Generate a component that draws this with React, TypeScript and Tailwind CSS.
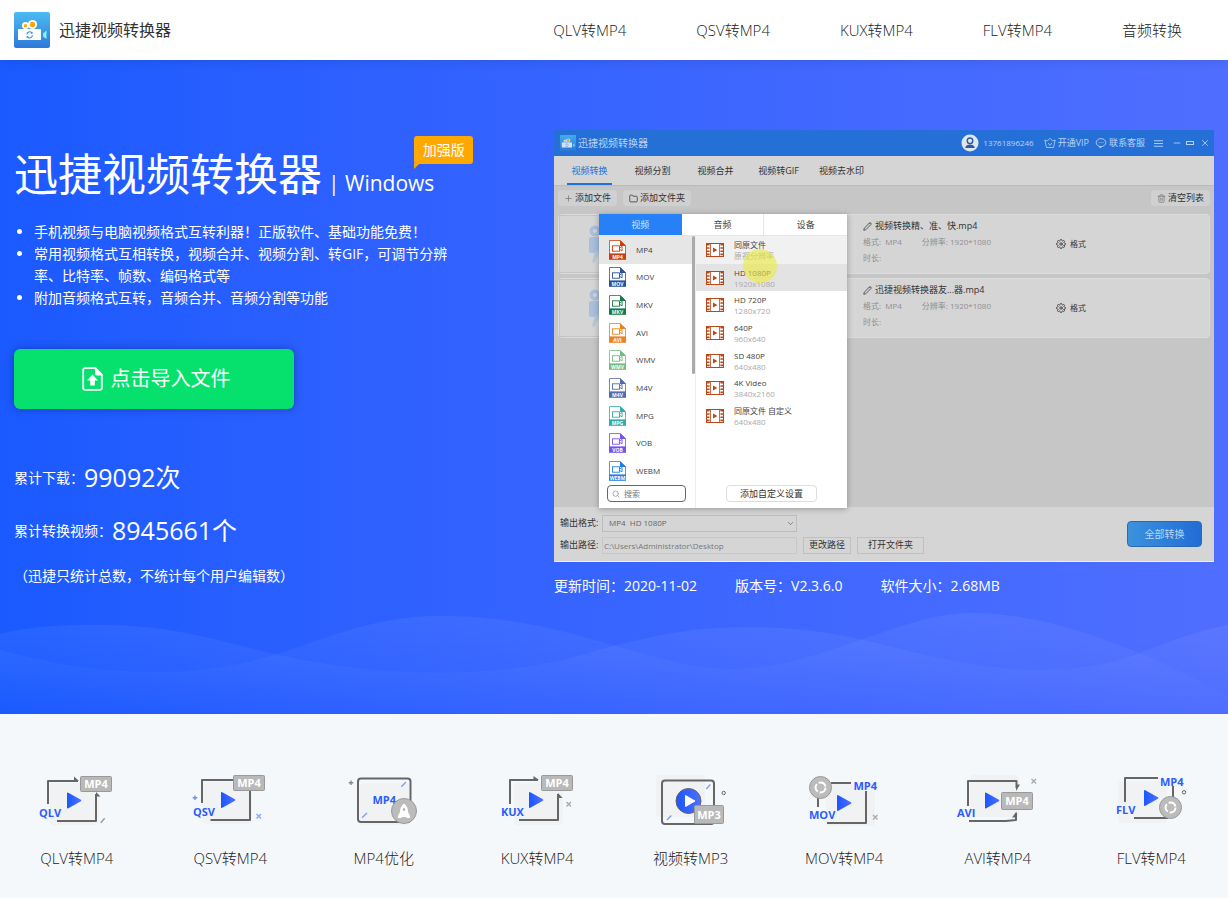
import type { ReactNode } from "react";
import {
  FiChevronDown,
  FiEdit2,
  FiFolder,
  FiMenu,
  FiMinus,
  FiPlus,
  FiSearch,
  FiSettings,
  FiTrash2,
  FiX,
} from "react-icons/fi";

const NAV = ["QLV转MP4", "QSV转MP4", "KUX转MP4", "FLV转MP4", "音频转换"];

const APP_TABS = ["视频转换", "视频分割", "视频合并", "视频转GIF", "视频去水印"];

const FORMATS = [
  { name: "MP4", color: "#c8400f" },
  { name: "MOV", color: "#2c5299" },
  { name: "MKV", color: "#147a43" },
  { name: "AVI", color: "#e88420" },
  { name: "WMV", color: "#72bb80" },
  { name: "M4V", color: "#536bad" },
  { name: "MPG", color: "#35aaa8" },
  { name: "VOB", color: "#7952e8" },
  { name: "WEBM", color: "#1f80e0" },
];

const SIZES = [
  { name: "同原文件", size: "原视分辨率", bg: "bg-[#f1f1f1]" },
  { name: "HD 1080P", size: "1920x1080", bg: "bg-[#e3e3e3]" },
  { name: "HD 720P", size: "1280x720", bg: "" },
  { name: "640P", size: "960x640", bg: "" },
  { name: "SD 480P", size: "640x480", bg: "" },
  { name: "4K Video", size: "3840x2160", bg: "" },
  { name: "同原文件 自定义", size: "640x480", bg: "" },
];

const FILES = ["视频转换精、准、快.mp4", "迅捷视频转换器友...器.mp4"];

function Logo({ className }: { className: string }) {
  return (
    <svg viewBox="0 0 36 36" className={className} aria-hidden="true">
      <defs>
        <linearGradient id="logoBg" x1="0" y1="0" x2="0" y2="1">
          <stop offset="0" stopColor="#4bbcf2" />
          <stop offset="1" stopColor="#2f78d8" />
        </linearGradient>
      </defs>
      <rect width="36" height="36" rx="2" fill="url(#logoBg)" />
      <circle cx="11.5" cy="13.5" r="3.6" fill="#fff" />
      <circle cx="11.5" cy="13.8" r="1.7" fill="#ffa800" />
      <circle cx="18.5" cy="12.5" r="4.6" fill="#fff" />
      <circle cx="18.5" cy="12.5" r="2.7" fill="#ffa800" />
      <rect x="4" y="17" width="23" height="11" rx="0.6" fill="#fff" />
      <path d="M29 21.5 L32.5 18.5 V27 L29 24.5z" fill="#7ff3f0" />
      <path d="M12.8 22.5a2.8 2.8 0 0 1 5-1.6M18.4 23.3a2.8 2.8 0 0 1-5 1.6" fill="none" stroke="#3b8be8" strokeWidth="1.1" />
      <path d="M18.6 19.6v2.2h-2.2zM12.6 26.2V24h2.2z" fill="#3b8be8" />
    </svg>
  );
}

function FormatIcon({ name, color }: { name: string; color: string }) {
  return (
    <svg viewBox="0 0 17 20" className="h-5 w-[17px] shrink-0" aria-hidden="true">
      <path d="M.5 14V.5h10.8L16.5 5.5V14" fill="#fff" stroke={color} strokeWidth=".8" />
      <path d="M11 .2L17 6h-6z" fill={color} />
      <rect x="3.5" y="5.8" width="7" height="5.4" fill="none" stroke={color} strokeWidth=".9" />
      <path d="M10.5 8l2.6-1.6v4.4L10.5 9.4" fill="none" stroke={color} strokeWidth=".9" />
      <rect y="13.4" width="17" height="6.4" fill={color} />
      <text x="8.5" y="18.5" textAnchor="middle" fontSize="5" fontWeight="700" fill="#fff">
        {name}
      </text>
    </svg>
  );
}

function FilmIcon() {
  return (
    <svg viewBox="0 0 18 14" className="h-3.5 w-[18px] shrink-0" aria-hidden="true">
      <rect x=".5" y=".5" width="17" height="13" fill="#fff" stroke="#b8481c" />
      <path d="M4.5.5v13M13.5.5v13" stroke="#b8481c" strokeWidth=".8" />
      <path d="M2.3 1v12M15.7 1v12" stroke="#b8481c" strokeWidth="2.6" strokeDasharray="1.6 1.6" />
      <path d="M7 4.4L11.4 7 7 9.6z" fill="#b8481c" />
    </svg>
  );
}

function ThumbIcon() {
  return (
    <svg viewBox="0 0 60 44" className="ml-6 h-11 w-[60px]" aria-hidden="true">
      <circle cx="11" cy="9" r="5.5" fill="#a9bfda" />
      <circle cx="11" cy="9" r="2" fill="#d5d5d5" />
      <circle cx="25" cy="8" r="7" fill="#a9bfda" />
      <rect x="5" y="15" width="34" height="16" rx="2" fill="#a9bfda" />
      <path d="M11 29l5 1-6 11-2-1z" fill="#b8c8dc" />
    </svg>
  );
}

function ToolButton({ children }: { children: ReactNode }) {
  return (
    <button type="button" className="flex h-4 items-center gap-0.5 rounded-sm bg-[#d0d0d0] px-1.5 text-[9px] text-[#333]">
      {children}
    </button>
  );
}

function TitleBar() {
  return (
    <div className="flex h-[26px] items-center justify-between bg-[#2570d6] pr-1 pl-1.5 text-[#b9d3f5]">
      <div className="flex items-center gap-0.5">
        <Logo className="size-4 opacity-80" />
        <span className="text-[10px]">迅捷视频转换器</span>
      </div>
      <div className="flex items-center text-[9px]">
        <svg viewBox="0 0 18 18" className="mr-1 size-[18px]" aria-hidden="true">
          <circle cx="9" cy="9" r="8.5" fill="#dfe6ee" />
          <circle cx="9" cy="6.8" r="2.8" fill="none" stroke="#2b5c9c" strokeWidth="1.4" />
          <path d="M4.2 14c.4-2.6 2.4-3.6 4.8-3.6s4.400 1 4.800 3.600z" fill="#2b5c9c" />
        </svg>
        <span className="mr-2.5 text-[8px]">13761896246</span>
        <svg viewBox="0 0 12 12" className="mr-0.5 size-3" fill="none" stroke="currentColor" strokeWidth=".8" aria-hidden="true">
          <path d="M.8 3l2.600 1L6 1.200 8.600 4l2.600-1-1.700 7.500h-7zM4.200 6L6 8.500 7.800 6" />
        </svg>
        <span className="mr-1.5">开通VIP</span>
        <svg viewBox="0 0 12 12" className="mr-0.5 size-3" fill="none" stroke="currentColor" strokeWidth=".9" aria-hidden="true">
          <ellipse cx="6" cy="5.600" rx="4.800" ry="4" />
          <path d="M4.500 9.300l.5 1.700 1.800-1.500M3.600 5.600h.9M5.600 5.600h.9M7.600 5.600h.9" />
        </svg>
        <span className="mr-2">联系客服</span>
        <FiMenu size={11} className="mr-2" />
        <FiMinus size={10} className="mr-1" />
        <span className="mr-1.5 h-1 w-2 border border-current" />
        <FiX size={10} />
      </div>
    </div>
  );
}

function FormatPopup() {
  return (
    <div className="absolute top-[84px] left-[45px] flex h-[294px] w-[248px] flex-col bg-white text-[#444] shadow-[0_1px_6px_rgba(0,0,0,0.3)]">
      <div className="grid h-[22px] shrink-0 grid-cols-3 border-b border-[#e6e6e6] text-[9px]">
        <button type="button" className="bg-[#2680f8] text-[#cfe3ff]">视频</button>
        <button type="button" className="border-r border-[#e6e6e6]">音频</button>
        <button type="button">设备</button>
      </div>
      <div className="flex flex-1">
        <div className="relative w-[97px] border-r border-[#eee]">
          <ul className="grid h-[249px] grid-rows-9 overflow-hidden text-[8px]">
            {FORMATS.map((f) => (
              <li key={f.name} className="flex items-center gap-2.5 pl-2.5 first:bg-[#e6e6e6]">
                <FormatIcon name={f.name} color={f.color} />
                {f.name}
              </li>
            ))}
          </ul>
          <span className="absolute top-0 right-0 h-[138px] w-[3px] rounded-sm bg-[#aaa]" />
          <label className="mx-2 flex h-[17px] w-[79px] items-center gap-1 rounded-sm border border-[#666] bg-white px-1 text-[#888]">
            <FiSearch size={8} className="shrink-0" />
            <input aria-label="搜索" placeholder="搜索" className="w-full bg-transparent text-[8px] outline-none placeholder:text-[#777]" />
          </label>
        </div>
        <div className="flex flex-1 flex-col items-center">
          <ul className="grid h-[194px] w-full grid-rows-7">
            {SIZES.map((s) => (
              <li key={s.name} className={`flex items-center gap-2.5 pl-2.5 ${s.bg}`}>
                <FilmIcon />
                <div className="text-[8px] leading-[11px]">
                  <p>{s.name}</p>
                  <p className="text-[#aaa]">{s.size}</p>
                </div>
              </li>
            ))}
          </ul>
          <button type="button" className="mt-[55px] h-[17px] w-[91px] rounded-sm border border-[#ddd] text-[9px] text-[#333]">
            添加自定义设置
          </button>
        </div>
      </div>
      <span className="absolute top-[35px] left-[144px] size-[34px] rounded-full bg-[#ebeb3c]/60" />
    </div>
  );
}

function AppWindow() {
  return (
    <div className="relative border-b border-[#eee] bg-[#d5d5d5]">
      <TitleBar />
      <div className="flex h-[30px] border-b border-[#bbb] pl-1 text-[9px] text-[#333]">
        {APP_TABS.map((tab, i) => (
          <button
            key={tab}
            type="button"
            className={
              i === 0
                ? "mx-[9px] w-[45px] border-b-2 border-[#2570d6] pt-0.5 text-[#2570d6]"
                : "w-[63px]"
            }
          >
            {tab}
          </button>
        ))}
      </div>

      <div className="h-[321px] bg-[#c6c6c6] px-1 pt-1">
        <div className="flex justify-between">
          <div className="flex gap-1.5">
            <ToolButton>
              <FiPlus size={9} className="text-[#777]" /> 添加文件
            </ToolButton>
            <ToolButton>
              <FiFolder size={9} /> 添加文件夹
            </ToolButton>
          </div>
          <ToolButton>
            <FiTrash2 size={9} className="text-[#777]" /> 清空列表
          </ToolButton>
        </div>
        <div className="mt-2 flex flex-col gap-1">
          {FILES.map((file) => (
            <div key={file} className="flex h-[60px] items-center rounded-sm border border-[#dcdcdc] bg-[#d5d5d5]">
              <div className="flex h-full w-[280px] items-center border border-[#c4c4c4]">
                <ThumbIcon />
              </div>
              <div className="ml-6 w-[193px] pb-1 text-[8px] leading-4 text-[#8f8f8f]">
                <p className="flex items-center gap-[3px] text-[9px] text-[#333]">
                  <FiEdit2 size={9} /> {file}
                </p>
                <p className="flex gap-5">
                  <span>格式:&nbsp; MP4</span>
                  <span>分辨率: 1920*1080</span>
                </p>
                <p>时长:</p>
              </div>
              <button type="button" className="flex items-center gap-1 text-[8px] text-[#333]">
                <FiSettings size={10} /> 格式
              </button>
            </div>
          ))}
        </div>
      </div>

      <div className="flex h-[54px] items-center justify-between pr-3 pl-1.5 text-[9px] text-[#333]">
        <div className="flex flex-col gap-[5px]">
          <div className="flex items-center">
            <label htmlFor="format" className="w-[42px]">输出格式:</label>
            <div className="relative">
              <select
                id="format"
                className="h-[17px] w-[195px] appearance-none border border-[#bdbdbd] bg-transparent px-1.5 text-[8px] text-[#666]"
              >
                <option>MP4&nbsp; HD 1080P</option>
              </select>
              <FiChevronDown size={9} className="pointer-events-none absolute top-1 right-0.5 text-[#666]" />
            </div>
          </div>
          <div className="flex items-center">
            <label htmlFor="path" className="w-[42px]">输出路径:</label>
            <input
              id="path"
              readOnly
              value="C:\Users\Administrator\Desktop"
              className="h-[17px] w-[195px] border border-[#c8c8c8] bg-transparent px-px text-[8px] text-[#777]"
            />
            <button type="button" className="ml-1.5 h-[17px] w-12 border border-[#c0c0c0]">更改路径</button>
            <button type="button" className="ml-1.5 h-[17px] w-[67px] border border-[#c0c0c0]">打开文件夹</button>
          </div>
        </div>
        <button
          type="button"
          className="h-[26px] w-[75px] rounded-sm border border-[#2a6bb8] bg-linear-to-r from-[#3c92dd] to-[#226cd6] text-[10px] text-[#b9d6f5]"
        >
          全部转换
        </button>
      </div>

      <FormatPopup />
    </div>
  );
}

function Waves() {
  return (
    <svg
      viewBox="0 0 1228 102"
      preserveAspectRatio="none"
      className="absolute bottom-0 left-0 h-[102px] w-full"
      aria-hidden="true"
    >
      <defs>
        <linearGradient id="wave" x1="0" y1="0" x2="0" y2="1">
          <stop offset="0" stopColor="#fff" stopOpacity=".06" />
          <stop offset="1" stopColor="#fff" stopOpacity="0" />
        </linearGradient>
      </defs>
      <path
        fill="url(#wave)"
        d="M0 22C30 14 65 13 102 13C170 13 215 28 270 41C380 66 480 66 564 48C610 35 670 15 748 15C840 15 880 35 951 48C1010 60 1060 62 1112 50C1150 40 1180 22 1228 13V102H0Z"
      />
      <path
        fill="url(#wave)"
        d="M0 38C50 52 100 60 157 60C290 60 330 4 442 4C570 4 650 57 732 57C820 57 900 1 971 1C1060 1 1150 45 1198 68L1228 84V102H0Z"
      />
    </svg>
  );
}

// Small pieces shared by the converter icons

function Frame({ d }: { d: string }) {
  return <path d={d} fill="none" stroke="#666" strokeWidth="2" strokeLinejoin="round" />;
}

function Shade({ x, y }: { x: number; y: number }) {
  return <rect x={x} y={y} width="49" height="42" rx="4" fill="#f0f2f4" />;
}

function Play({ x, y }: { x: number; y: number }) {
  return (
    <path
      d={`M${x} ${y + 1}q0-1.400 1.300-.8l12.600 7q1 .8 0 1.600l-12.600 7q-1.300.6-1.300-.8z`}
      fill="url(#play)"
    />
  );
}

function Word({ x, y, children }: { x: number; y: number; children: string }) {
  return (
    <text x={x} y={y} fontSize="11" fontWeight="700" fill="#2b5cff">
      {children}
    </text>
  );
}

function Tag({ x, y, h = 15, w = 31, children }: { x: number; y: number; h?: number; w?: number; children: string }) {
  return (
    <>
      <rect x={x} y={y} width={w} height={h} rx="1" fill="#b9b9b9" stroke="#999" />
      <text x={x + w / 2} y={y + h / 2 + 4} textAnchor="middle" fontSize="11" fontWeight="700" fill="#fff">
        {children}
      </text>
    </>
  );
}

function Disc({ x, y }: { x: number; y: number }) {
  return (
    <>
      <circle cx={x} cy={y} r="11" fill="#bcbcbc" stroke="#999" />
      <circle cx={x} cy={y} r="5" fill="none" stroke="#fff" strokeWidth="2" strokeDasharray="8.500 2" />
    </>
  );
}

function Cross({ x, y, color = "#aaa" }: { x: number; y: number; color?: string }) {
  return <path d={`M${x - 2} ${y - 2}l4.500 4.500m0-4.500l-4.500 4.500`} stroke={color} strokeWidth="1.400" />;
}

const TOOLS: { label: string; art: ReactNode }[] = [
  {
    label: "QLV转MP4",
    art: (
      <>
        <Shade x={23} y={13} />
        <Frame d="M21 34V11H51M69 24V51H30" />
        <path d="M47 6.500l5 4.500h-5zM69 22l4.500 4.500H69z" fill="#666" />
        <Tag x={53.500} y={6.500}>MP4</Tag>
        <Play x={40} y={22.500} />
        <Word x={12} y={47}>QLV</Word>
        <path d="M73.700 52.700l4-4.400" stroke="#999" strokeWidth="1.400" />
      </>
    ),
  },
  {
    label: "QSV转MP4",
    art: (
      <>
        <Shade x={23} y={12} />
        <Frame d="M22 33V10H54M70 20V50H30.500" />
        <Tag x={53.500} y={5.500}>MP4</Tag>
        <Play x={41} y={22} />
        <Word x={13} y={46}>QSV</Word>
        <path d="M12.700 27.700h4.600M15 25.400v4.600" stroke="#6b8cff" strokeWidth="1.400" />
        <Cross x={78.500} y={46} color="#8ca6ff" />
      </>
    ),
  },
  {
    label: "MP4优化",
    art: (
      <>
        <Shade x={26} y={13} />
        <rect x="24" y="8.500" width="52.500" height="43.500" rx="3" fill="none" stroke="#666" strokeWidth="2" />
        <Word x={38.500} y={34}>MP4</Word>
        <path d="M67.300 16.700L72 12M28 47.700L33 43" stroke="#7f9cff" strokeWidth="1.400" />
        <circle cx="70" cy="41" r="12.500" fill="#bcbcbc" stroke="#999" />
        <path d="M70 33.500c3 2 4 5 4 8.500l2 4v2h-3l-1-1h-4l-1 1h-3v-2l2-4c0-3.500 1-6.500 4-8.500z" fill="#fff" />
        <circle cx="70" cy="39.500" r="1.200" fill="#aaa" />
        <path d="M14.700 12.700h4.600M17 10.400v4.600" stroke="#888" strokeWidth="1.400" />
      </>
    ),
  },
  {
    label: "KUX转MP4",
    art: (
      <>
        <Shade x={27} y={13} />
        <Frame d="M23 34V10H51M71 24V50H32" />
        <path d="M46.500 6l5.500 4h-5.500zM71 23l4.500 5H71z" fill="#666" />
        <Tag x={54.500} y={5.500}>MP4</Tag>
        <Play x={42} y={22} />
        <Word x={14} y={46}>KUX</Word>
        <Cross x={81.500} y={34} />
      </>
    ),
  },
  {
    label: "视频转MP3",
    art: (
      <>
        <Shade x={15} y={5} />
        <rect x="21" y="10.500" width="52" height="43.500" rx="3" fill="none" stroke="#666" strokeWidth="2" />
        <circle cx="47.500" cy="31" r="12.500" fill="url(#play)" stroke="#666" />
        <path d="M44.500 25.500l9.500 5.500-9.500 5.500z" fill="#fff" stroke="#fff" strokeLinejoin="round" />
        <path d="M65.300 19l4-4.500M26 50l4.300-4.500" stroke="#7f9cff" strokeWidth="1.400" />
        <Tag x={53.500} y={35.500} w={29} h={18}>MP3</Tag>
        <circle cx="82.700" cy="23" r="1.700" fill="none" stroke="#666" />
      </>
    ),
  },
  {
    label: "MOV转MP4",
    art: (
      <>
        <Shade x={32} y={14} />
        <Frame d="M37 13H57M24 28V37M72 21V53H33" />
        <Disc x={26.500} y={17.500} />
        <Word x={59.500} y={20}>MP4</Word>
        <Play x={43} y={25} />
        <Word x={15} y={49}>MOV</Word>
        <Cross x={81} y={47} />
      </>
    ),
  },
  {
    label: "AVI转MP4",
    art: (
      <>
        <Shade x={22} y={5} />
        <Frame d="M20 36V11H68.500V18M68 43V50L58 51H21" />
        <path d="M68 21v-6.500h4zM68.500 41.500v6h-4.500z" fill="#666" />
        <Tag x={53.500} y={22.500} h={17}>MP4</Tag>
        <Play x={37} y={22.500} />
        <Word x={9} y={47}>AVI</Word>
        <Cross x={85.500} y={11} />
      </>
    ),
  },
  {
    label: "FLV转MP4",
    art: (
      <>
        <Shade x={17} y={11} />
        <Frame d="M24 32V8H57M72 16V28M33 48H67" />
        <Disc x={69.500} y={37.500} />
        <Word x={59} y={15.500}>MP4</Word>
        <Play x={43} y={20} />
        <Word x={15} y={44}>FLV</Word>
        <circle cx="83" cy="22.300" r="1.700" fill="none" stroke="#666" />
      </>
    ),
  },
];

export default function App() {
  return (
    <div className="font-['Open_Sans','Noto_Sans_CJK_SC',sans-serif]">
      <header className="relative z-10 bg-white shadow-[0_2px_10px_rgba(0,0,0,0.1)]">
        <div className="mx-auto flex h-[60px] max-w-[1200px] items-center justify-between">
          <a href="#top" className="flex items-center gap-[9px] text-base text-[#333]">
            <Logo className="size-9" />
            迅捷视频转换器
          </a>
          <nav className="flex text-[15px] font-light text-[#222]">
            {NAV.map((item) => (
              <a key={item} href="#tools" className="px-[35px] last:pr-8">
                {item}
              </a>
            ))}
          </nav>
        </div>
      </header>

      <section id="top" className="relative min-h-[654px] bg-linear-to-r from-[#1a5aff] to-[#4f6eff] pt-[70px] text-white">
        <Waves />
        <div className="relative mx-auto grid max-w-[1200px] grid-cols-[45%_55%]">
          <div className="pt-3.5 text-sm">
            <div className="relative flex w-fit items-baseline leading-[60px]">
              <h1 className="text-[44px]">迅捷视频转换器</h1>
              <span className="ml-1.5 text-[21px]">| Windows</span>
              <span className="absolute -top-2 left-full -ml-5 h-7 w-[59px] rounded-[3px] bg-[#ffa800] text-center text-sm leading-7">
                加强版
                <svg viewBox="0 0 6 6" className="absolute top-[27px] left-0 size-1.5" aria-hidden="true">
                  <path d="M0 0h6L0 6z" fill="#ffa800" />
                </svg>
              </span>
            </div>
            <ul className="mt-2 max-w-[440px] list-disc pl-5 leading-[22px]">
              <li>手机视频与电脑视频格式互转利器！正版软件、基础功能免费！</li>
              <li>常用视频格式互相转换，视频合并、视频分割、转GIF，可调节分辨率、比特率、帧数、编码格式等</li>
              <li>附加音频格式互转，音频合并、音频分割等功能</li>
            </ul>
            <button
              type="button"
              className="mt-10 flex h-[60px] w-[280px] items-center justify-center gap-2 rounded-md bg-[#05e16c] pl-1 text-xl shadow-[0_0_8px_rgba(0,0,60,0.35)]"
            >
              <svg viewBox="0 0 21 24" className="h-6 w-[21px]" aria-hidden="true">
                <path d="M3 1.200h10.500l6.300 6.500V21a1.800 1.800 0 0 1-1.800 1.800H3A1.800 1.800 0 0 1 1.200 21V3A1.800 1.800 0 0 1 3 1.200z" fill="none" stroke="#fff" strokeWidth="1.800" />
                <path d="M13 1l7.500 7.500H14.500A1.500 1.500 0 0 1 13 7z" fill="#fff" />
                <path d="M10.500 7.500l5.500 6h-3.200v5H8.200v-5H5z" fill="#fff" />
              </svg>
              点击导入文件
            </button>
            <div className="mt-[42px] leading-[53px]">
              <p className="flex items-center">
                累计下载：<span className="text-[25px] leading-[53px]">99092次</span>
              </p>
              <p className="flex items-center">
                累计转换视频：<span className="text-[25px] leading-[53px]">8945661个</span>
              </p>
            </div>
            <p className="mt-2 leading-[22px]">（迅捷只统计总数，不统计每个用户编辑数）</p>
          </div>

          <div>
            <AppWindow />
            <div className="mt-3 flex gap-[38px] text-sm leading-6">
              <span>更新时间：2020-11-02</span>
              <span>版本号：V2.3.6.0</span>
              <span>软件大小：2.68MB</span>
            </div>
          </div>
        </div>
      </section>

      <section id="tools" className="grid grid-cols-8 bg-[#f4f8fb] pt-14 pb-7">
        {TOOLS.map((tool, i) => (
          <a key={tool.label} href="#top" className="flex flex-col items-center text-[15px] leading-6 font-light text-[#222]">
            <svg viewBox="0 0 100 60" className="mb-4 h-[60px] w-[100px]" aria-hidden="true">
              {i === 0 && (
                <defs>
                  <linearGradient id="play">
                    <stop offset="0" stopColor="#1a56ff" />
                    <stop offset="1" stopColor="#4f70ff" />
                  </linearGradient>
                </defs>
              )}
              {tool.art}
            </svg>
            {tool.label}
          </a>
        ))}
      </section>
    </div>
  );
}
